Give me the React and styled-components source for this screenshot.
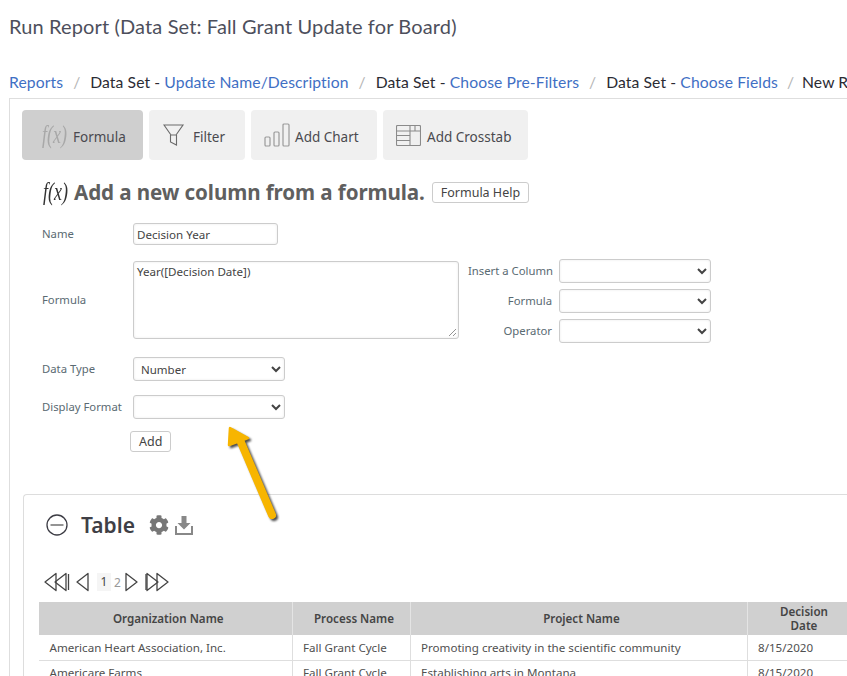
import React from "react";
import styled, { createGlobalStyle } from "styled-components";
import { FaCog } from "react-icons/fa";

const GlobalStyle = createGlobalStyle`
  html, body {
    margin: 0;
    height: 676px;
    overflow: hidden;
    background: #fff;
    font-family: "Noto Sans", "Open Sans", sans-serif;
  }
`;

const Page = styled.div`
  position: relative;
  width: 847px;
  height: 676px;
  overflow: hidden;
`;
const Title = styled.h1`
  margin: 0;
  padding: 13px 0 0 9px;
  height: 33px;
  font-family: Lato, sans-serif;
  font-weight: 400;
  font-size: 20px;
  line-height: 26px;
  letter-spacing: 0.13px;
  color: #4d4f5c;
  white-space: nowrap;
`;
const Crumbs = styled.div`
  display: flex;
  align-items: center;
  height: 24px;
  margin-top: 24px;
  padding-left: 9px;
  font-family: Lato, sans-serif;
  font-size: 15.7px;
  white-space: nowrap;
  color: #2b2b33;
`;
const Crumb = styled.span`
  letter-spacing: 0.1px;
`;
const Link = styled.span`
  color: #3f6fc4;
`;
const Sep = styled.span`
  margin: 0 ${(props) => props.after || 10}px 0 ${(props) => props.before || 10}px;
  color: #b5b5b5;
`;
const Panel = styled.div`
  margin: 4px 0 0 9px;
  width: 900px;
  height: 600px;
  border-top: 1px solid #dedede;
  border-left: 1px solid #dedede;
  padding: 11px 0 0 12px;
  box-sizing: border-box;
`;
const Tabs = styled.div`
  display: flex;
  gap: 6px;
`;
const Tab = styled.div`
  display: flex;
  align-items: center;
  gap: ${(props) => props.gap}px;
  box-sizing: border-box;
  width: ${(props) => props.width}px;
  height: 50px;
  padding-left: ${(props) => props.left}px;
  border-radius: 4px;
  background: ${(props) => (props.active ? "#cfcfcf" : "#f0f0f0")};
  font-size: 13.5px;
  color: #4a4a4f;
`;
const TabText = styled.span`
  padding-top: 4px;
`;
const Fx = styled.span`
  display: inline-block;
  width: 24px;
  font-family: "Liberation Serif", serif;
  font-style: italic;
  font-size: 25px;
  line-height: 28px;
  color: ${(props) => props.color};
  transform: scaleX(0.72);
  transform-origin: left center;
  white-space: nowrap;
`;
const HeadingRow = styled.div`
  display: flex;
  align-items: center;
  height: 24px;
  margin: 20px 0 0 21px;
`;
const Heading = styled.h2`
  margin: 0 7px 0 7px;
  font-size: 20.6px;
  font-weight: 700;
  color: #5f5f5f;
  letter-spacing: -0.1px;
  white-space: nowrap;
`;
const Button = styled.button`
  box-sizing: border-box;
  height: 21px;
  padding: 0 8px;
  background: #fff;
  border: 1px solid #ccc;
  border-radius: 3px;
  font-family: inherit;
  font-size: 12.5px;
  color: #444;
`;
const Form = styled.div`
  margin: 19px 0 0 20px;
`;
const FormRow = styled.div`
  display: flex;
  align-items: ${(props) => (props.multi ? "flex-start" : "center")};
  margin-top: ${(props) => props.top || 0}px;
`;
const Label = styled.label`
  flex: none;
  width: ${(props) => props.width || 91}px;
  padding-bottom: 1px;
  font-size: 11.3px;
  color: #5a6a72;
  white-space: nowrap;
  text-align: ${(props) => (props.right ? "right" : "left")};
`;
const MidLabel = styled(Label)`
  align-self: center;
`;
const Field = styled.div`
  box-sizing: border-box;
  display: flex;
  align-items: ${(props) => (props.multi ? "flex-start" : "center")};
  flex: none;
  width: ${(props) => props.width}px;
  height: ${(props) => props.height}px;
  padding: ${(props) => (props.multi ? "2px" : "0")} 3px;
  border: 1px solid #ccc;
  border-radius: 3px;
  box-shadow: inset 0 0 3px rgba(0, 0, 0, 0.08);
  font-size: 11.6px;
  color: #444;
  position: relative;
`;
const Select = styled.select`
  box-sizing: border-box;
  width: 152px;
  height: 24px;
  padding: 0 3px;
  background: #fff;
  border: 1px solid #ccc;
  border-radius: 3px;
  box-shadow: inset 0 0 3px rgba(0, 0, 0, 0.08);
  font-family: inherit;
  font-size: 11.5px;
  color: #444;
`;
const Grip = styled.svg`
  position: absolute;
  right: 1px;
  bottom: 1px;
`;
const Side = styled.div`
  display: grid;
  grid-template-columns: 84px 152px;
  grid-auto-rows: 24px;
  row-gap: 6px;
  column-gap: 7px;
  height: 78px;
  margin: -2px 0 0 9px;
  align-items: center;
`;
const AddRow = styled.div`
  margin: 10px 0 0 108px;
`;
const AddButton = styled(Button)`
  width: 41px;
`;
const Card = styled.section`
  margin: 42px 0 0 1px;
  height: 300px;
  border-top: 1px solid #ddd;
  border-left: 1px solid #ddd;
  border-top-left-radius: 4px;
  padding: 17px 0 0 15px;
`;
const CardHead = styled.div`
  display: flex;
  align-items: center;
  height: 26px;
  padding-left: 7px;
`;
const CardTitle = styled.h3`
  margin: 0 14px 0 13px;
  font-size: 21px;
  font-weight: 600;
  color: #3f3f46;
`;
const DownloadIcon = styled.svg`
  margin-left: 5px;
`;
const Pager = styled.div`
  display: flex;
  align-items: center;
  height: 22px;
  margin: 33px 0 0 5px;
  font-size: 12px;
`;
const PagerIcon = styled.svg`
  margin-left: ${(props) => props.left || 0}px;
`;
const CurrentPage = styled.span`
  width: 14px;
  height: 18px;
  line-height: 18px;
  margin-left: 7px;
  text-align: center;
  background: #f5f5f5;
  color: #444;
`;
const OtherPage = styled.span`
  width: 13px;
  text-align: center;
  color: #999;
`;
const Table = styled.table`
  table-layout: fixed;
  width: 816px;
  margin-top: 9px;
  border-collapse: collapse;
  font-size: 11.6px;
`;
const Th = styled.th`
  height: 33px;
  padding: 0 0 0 6px;
  background: #d0d0d0;
  border-right: 1px solid #e4e4e4;
  font-weight: 600;
  color: #454545;
  line-height: 14px;
  box-sizing: border-box;
`;
const Td = styled.td`
  height: 25px;
  padding: 0 10px 0 10.5px;
  border-right: 1px solid #dedede;
  border-bottom: 1px solid #dedede;
  color: #505050;
  white-space: nowrap;
  box-sizing: border-box;
`;
const ArrowSvg = styled.svg`
  position: absolute;
  left: 222px;
  top: 424px;
`;
const ArrowShape = styled.g`
  filter: drop-shadow(2px 2px 1px rgba(0, 0, 0, 0.7));
`;

const Triangle = ({ dir = "left", x = 0 }) => (
  <polygon
    points={dir === "left" ? `${x + 12},1.5 ${x + 1},10 ${x + 12},18.500` : `${x + 1},1.5 ${x + 12},10 ${x + 1},18.500`}
    fill="none"
    stroke="#444"
    strokeWidth="1.3"
    strokeLinejoin="round"
  />
);

const Rows = [
  ["American Heart Association, Inc.", "Fall Grant Cycle", "Promoting creativity in the scientific community", "8/15/2020"],
  ["Americare Farms", "Fall Grant Cycle", "Establishing arts in Montana", "8/15/2020"],
];

const App = () => {
  return (
    <Page>
      <GlobalStyle />
      <Title>Run Report (Data Set: Fall Grant Update for Board)</Title>
      <Crumbs>
        <Crumb><Link>Reports</Link></Crumb>
        <Sep>/</Sep>
        <Crumb>Data Set - <Link>Update Name/Description</Link></Crumb>
        <Sep>/</Sep>
        <Crumb>Data Set - <Link>Choose Pre-Filters</Link></Crumb>
        <Sep>/</Sep>
        <Crumb>Data Set - <Link>Choose Fields</Link></Crumb>
        <Sep before={9} after={8}>/</Sep>
        <Crumb>New Report</Crumb>
      </Crumbs>
      <Panel>
        <Tabs>
          <Tab width={121} left={20} gap={7} active>
            <Fx color="#a8a8a8">f(x)</Fx>
            <TabText>Formula</TabText>
          </Tab>
          <Tab width={96} left={14} gap={8}>
            <svg width="22" height="24" viewBox="0 0 22 24" fill="none" stroke="#6a6a6a" strokeWidth="1.1">
              <path d="M1 2h19l-7 10H8zM7.500 12v7l6 3V12" />
            </svg>
            <TabText>Filter</TabText>
          </Tab>
          <Tab width={126} left={13} gap={5}>
            <svg width="26" height="24" viewBox="0 0 26 24" fill="none" stroke="#9a9a9a" strokeWidth="1.2">
              <rect x="1" y="14" width="5" height="9" rx="1" />
              <rect x="10" y="9" width="5" height="14" rx="1" />
              <rect x="19" y="1" width="6" height="22" rx="1" />
            </svg>
            <TabText>Add Chart</TabText>
          </Tab>
          <Tab width={145} left={13} gap={6}>
            <svg width="25" height="21" viewBox="0 0 25 21" fill="none" stroke="#8a8a8a" strokeWidth="1.1">
              <rect x="0.5" y="0.5" width="24" height="20" rx="1" />
              <path d="M.5 6h24M14 .5V20M.5 10.500H14M.5 15.500H14M19 .5V6" />
            </svg>
            <TabText>Add Crosstab</TabText>
          </Tab>
        </Tabs>
        <HeadingRow>
          <Fx color="#333">f(x)</Fx>
          <Heading>Add a new column from a formula.</Heading>
          <Button>Formula Help</Button>
        </HeadingRow>
        <Form>
          <FormRow>
            <Label>Name</Label>
            <Field width={145} height={22}>Decision Year</Field>
          </FormRow>
          <FormRow multi top={16}>
            <MidLabel>Formula</MidLabel>
            <Field multi width={326} height={78}>
              Year([Decision Date])
              <Grip width="10" height="10" viewBox="0 0 10 10" stroke="#777" strokeWidth="0.8">
                <path d="M2 9l7-7M6 9l3-3" />
              </Grip>
            </Field>
            <Side>
              <Label right width={84}>Insert a Column</Label>
              <Select />
              <Label right width={84}>Formula</Label>
              <Select />
              <Label right width={84}>Operator</Label>
              <Select />
            </Side>
          </FormRow>
          <FormRow top={18}>
            <Label>Data Type</Label>
            <Select defaultValue="Number">
              <option>Number</option>
            </Select>
          </FormRow>
          <FormRow top={14}>
            <Label>Display Format</Label>
            <Select />
          </FormRow>
        </Form>
        <AddRow>
          <AddButton>Add</AddButton>
        </AddRow>
        <Card>
          <CardHead>
            <svg width="22" height="22" viewBox="0 0 22 22" fill="none">
              <circle cx="11" cy="11" r="10" stroke="#3c3c44" strokeWidth="1.3" />
              <path d="M4.500 11h13" stroke="#888" strokeWidth="1.8" />
            </svg>
            <CardTitle>Table</CardTitle>
            <FaCog size={20} color="#777" />
            <DownloadIcon width="20" height="20" viewBox="0 0 20 20" fill="#888">
              <path d="M7.500 1h5v7h4l-6.500 6.500L3.500 8h4z" />
              <path d="M1 11h2v7h14v-7h2v9H1z" />
            </DownloadIcon>
          </CardHead>
          <Pager>
            <PagerIcon width="26" height="20">
              <Triangle x={0} />
              <Triangle x={10} />
              <path d="M24.500 2v16" stroke="#444" strokeWidth="1.3" />
            </PagerIcon>
            <PagerIcon width="14" height="20" left={6}>
              <Triangle x={0} />
            </PagerIcon>
            <CurrentPage>1</CurrentPage>
            <OtherPage>2</OtherPage>
            <PagerIcon width="14" height="20" left={1}>
              <Triangle dir="right" x={0} />
            </PagerIcon>
            <PagerIcon width="26" height="20" left={6}>
              <path d="M1 2v16" stroke="#444" strokeWidth="1.3" />
              <Triangle dir="right" x={1} />
              <Triangle dir="right" x={11} />
            </PagerIcon>
          </Pager>
          <Table>
            <colgroup>
              <col width="253" />
              <col width="118" />
              <col width="337" />
              <col width="108" />
            </colgroup>
            <thead>
              <tr>
                <Th>Organization Name</Th>
                <Th>Process Name</Th>
                <Th>Project Name</Th>
                <Th>Decision<br />Date</Th>
              </tr>
            </thead>
            <tbody>
              {Rows.map((row) => (
                <tr key={row[0]}>
                  {row.map((cell) => (
                    <Td key={cell}>{cell}</Td>
                  ))}
                </tr>
              ))}
            </tbody>
          </Table>
        </Card>
      </Panel>
      <ArrowSvg width="60" height="104" viewBox="0 0 60 104">
        <ArrowShape fill="#f7b500" stroke="#f7b500" strokeLinejoin="round" strokeLinecap="round">
          <path d="M18 16L50 91" strokeWidth="8" />
          <polygon points="8,4 7,21 26,14" strokeWidth="2.5" />
        </ArrowShape>
      </ArrowSvg>
    </Page>
  );
};

export default App;
